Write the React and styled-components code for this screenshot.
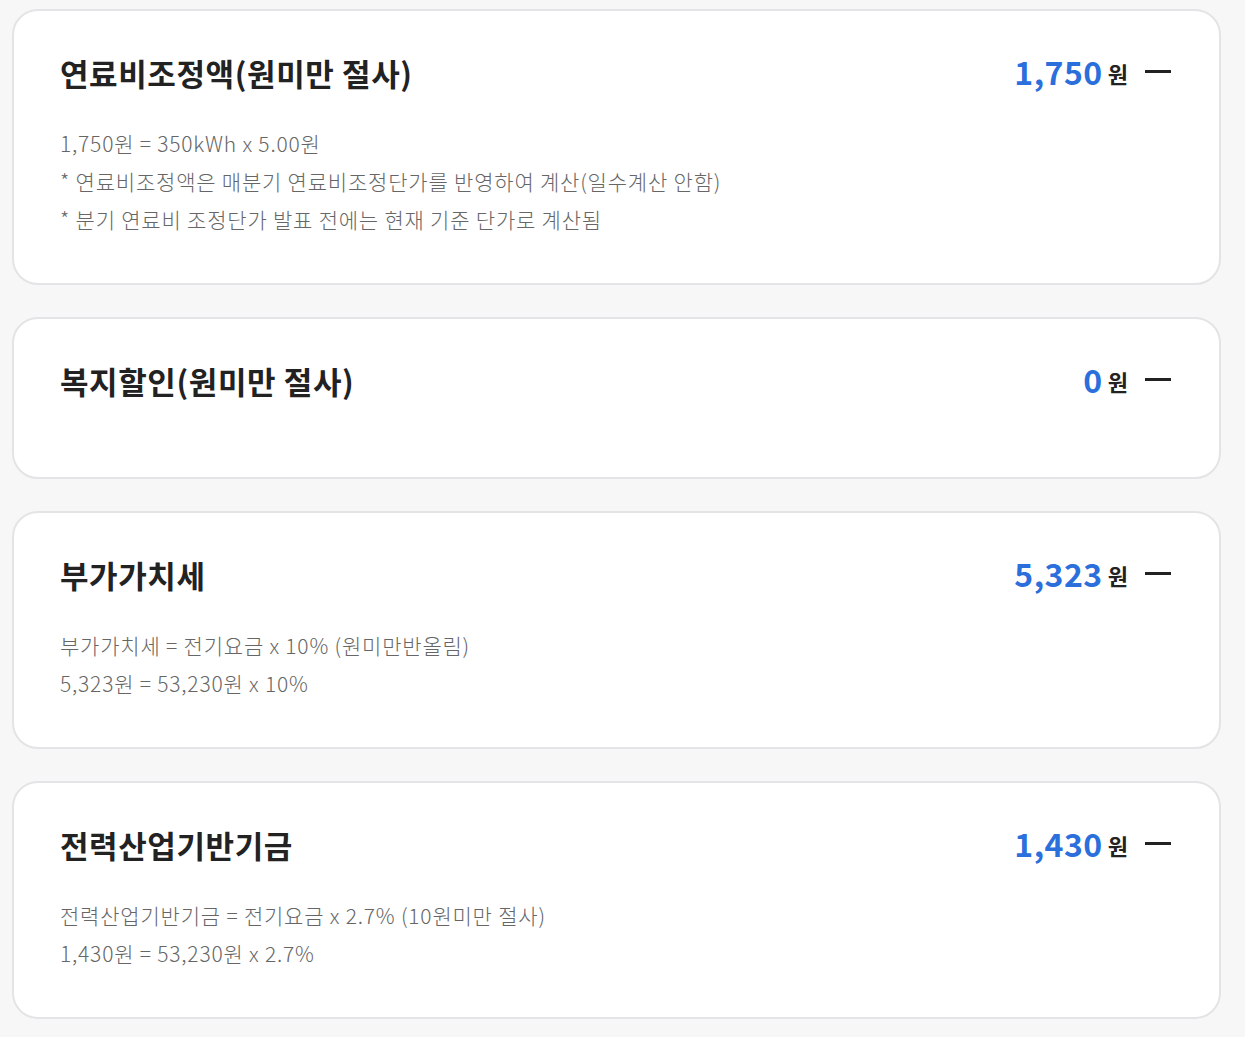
import styled, { createGlobalStyle } from "styled-components";

const GlobalStyle = createGlobalStyle`
  body {
    margin: 0;
    background: #f7f7f8;
    font-family: "Noto Sans CJK KR", "Noto Sans", sans-serif;
    color: #222;
  }
`;

const List = styled.div`
  display: flex;
  flex-direction: column;
  gap: 32px;
  padding: 9px 24px 18px 12px;
`;

const Card = styled.section`
  background: #fff;
  border: 2px solid #e4e4e6;
  border-radius: 26px;
  padding: 38px 47px 45px 46px;
`;

const Header = styled.div`
  display: flex;
  align-items: center;
  justify-content: space-between;
  height: 46px;
`;

const Title = styled.h2`
  margin: 0;
  font-size: 31px;
  font-weight: 700;
  color: #222;
  letter-spacing: 0.6px;
`;

const Amount = styled.div`
  display: flex;
  align-items: center;
  margin-top: -2px;
`;

const Value = styled.span`
  font-size: 32px;
  font-weight: 700;
  color: #2b6fdc;
  letter-spacing: 0.5px;
  margin-right: 5px;
`;

const Unit = styled.span`
  font-size: 22px;
  font-weight: 700;
  color: #222;
  margin-top: 3px;
`;

const Toggle = styled.button`
  display: flex;
  align-items: center;
  justify-content: center;
  width: 28px;
  height: 28px;
  margin-left: 16px;
  padding: 0;
  background: none;
  border: none;
  cursor: pointer;

  &::before {
    content: "";
    width: 26px;
    height: 3px;
    background: #222;
  }
`;

const Details = styled.div`
  margin-top: 29px;
`;

const Line = styled.p`
  margin: 0;
  font-size: 21px;
  line-height: 38px;
  font-weight: 300;
  color: #666;
  letter-spacing: 0.8px;
`;

const items = [
  {
    title: "연료비조정액(원미만 절사)",
    value: "1,750",
    lines: [
      "1,750원 = 350kWh x 5.00원",
      "* 연료비조정액은 매분기 연료비조정단가를 반영하여 계산(일수계산 안함)",
      "* 분기 연료비 조정단가 발표 전에는 현재 기준 단가로 계산됨",
    ],
  },
  {
    title: "복지할인(원미만 절사)",
    value: "0",
    lines: [],
  },
  {
    title: "부가가치세",
    value: "5,323",
    lines: ["부가가치세 = 전기요금 x 10% (원미만반올림)", "5,323원 = 53,230원 x 10%"],
  },
  {
    title: "전력산업기반기금",
    value: "1,430",
    lines: ["전력산업기반기금 = 전기요금 x 2.7% (10원미만 절사)", "1,430원 = 53,230원 x 2.7%"],
  },
];

function ChargeCard({ item }) {
  return (
    <Card>
      <Header>
        <Title>{item.title}</Title>
        <Amount>
          <Value>{item.value}</Value>
          <Unit>원</Unit>
          <Toggle aria-label="접기" />
        </Amount>
      </Header>
      <Details>
        {item.lines.map((line) => (
          <Line key={line}>{line}</Line>
        ))}
      </Details>
    </Card>
  );
}

export default function App() {
  return (
    <>
      <GlobalStyle />
      <List>
        {items.map((item) => (
          <ChargeCard key={item.title} item={item} />
        ))}
      </List>
    </>
  );
}
